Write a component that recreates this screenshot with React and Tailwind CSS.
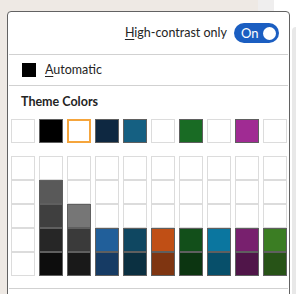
import React from "react";

const topRow = [
    null, "#000000", "selected", "#0e2841", "#156082",
    null, "#196b24", null, "#a02b93", null,
];

// each column: 5 cells from top to bottom, null = empty (white) cell
const shades = [
    [null, null, null, null, null],
    [null, "#595959", "#3f3f3f", "#262626", "#0d0d0d"],
    [null, null, "#767676", "#3a3a3a", "#191919"],
    [null, null, null, "#215f9a", "#163b64"],
    [null, null, null, "#0f4761", "#0b3041"],
    [null, null, null, "#c04f15", "#7f3511"],
    [null, null, null, "#124f1a", "#0c3511"],
    [null, null, null, "#0b769f", "#074f6a"],
    [null, null, null, "#78206e", "#501549"],
    [null, null, null, "#3b7d23", "#275317"],
];

const Swatch = ({ color }) => {
    if (color === "selected") {
        return <div className="w-[24px] h-[24px] border-2 border-[#f5a53c] bg-white" />;
    }
    if (!color) {
        return <div className="w-[24px] h-[24px] border border-[#dcdcdc] bg-white" />;
    }
    return (
        <div
            className="w-[24px] h-[24px] border border-[#5f5f5f]"
            style={{ backgroundColor: color }}
        />
    );
};

const Toggle = () => (
    <div className="w-[45px] h-[20px] rounded-full bg-[#1b5ec1] flex items-center justify-between pl-[7px] pr-[3px]">
        <span className="text-white text-[13px] leading-none">On</span>
        <span className="w-[13px] h-[13px] rounded-full bg-white" />
    </div>
);

export default function App() {
    return (
        <div
            className="relative w-[296px] h-[294px] overflow-hidden flex bg-white text-[#242424]"
            style={{ fontFamily: 'Lato, "Noto Sans", sans-serif' }}
        >
            {/* page behind the popup */}
            <div className="flex-1 bg-[#eee9e4]" />
            <div className="w-[16px] bg-[#efeeee]" />
            <div className="w-[22px] bg-white">
                <div className="mt-[27px] ml-[18px] h-full rounded-tl-[4px] bg-[#e8e8e8]" />
            </div>

            {/* colour picker popup */}
            <div className="absolute left-[7px] top-[11px] w-[283px] h-[300px] bg-white border border-[#626262] rounded-tl-[4px] rounded-tr-[4px]">

                <div className="h-[42px] flex items-center justify-end gap-[7px] pr-[10px]">
                    <span className="text-[12.5px]">
                        <span className="underline underline-offset-2">H</span>igh-contrast only
                    </span>
                    <Toggle />
                </div>

                <div className="h-px bg-[#d1d1d1] mx-px" />

                <div className="h-[30px] flex items-center pl-[14px] gap-[9px]">
                    <div className="w-[14px] h-[14px] bg-black" />
                    <span className="text-[12.5px]">
                        <span className="underline underline-offset-2">A</span>utomatic
                    </span>
                </div>

                <div className="h-px bg-[#d1d1d1] mx-px" />

                <div className="pl-[13px] pt-[8px] text-[12.5px] leading-[16px] font-bold">
                    Theme Colors
                </div>

                <div className="mt-[9px] ml-[3px] flex gap-[4px]">
                    {topRow.map((c, i) => (
                        <Swatch key={i} color={c} />
                    ))}
                </div>

                <div className="mt-[13px] ml-[3px] flex gap-[4px]">
                    {shades.map((col, i) => (
                        <div key={i} className="flex flex-col">
                            {col.map((c, j) => (
                                <Swatch key={j} color={c} />
                            ))}
                        </div>
                    ))}
                </div>

                <div className="mt-[12px] h-px bg-[#d1d1d1] mx-px" />
            </div>
        </div>
    );
}
